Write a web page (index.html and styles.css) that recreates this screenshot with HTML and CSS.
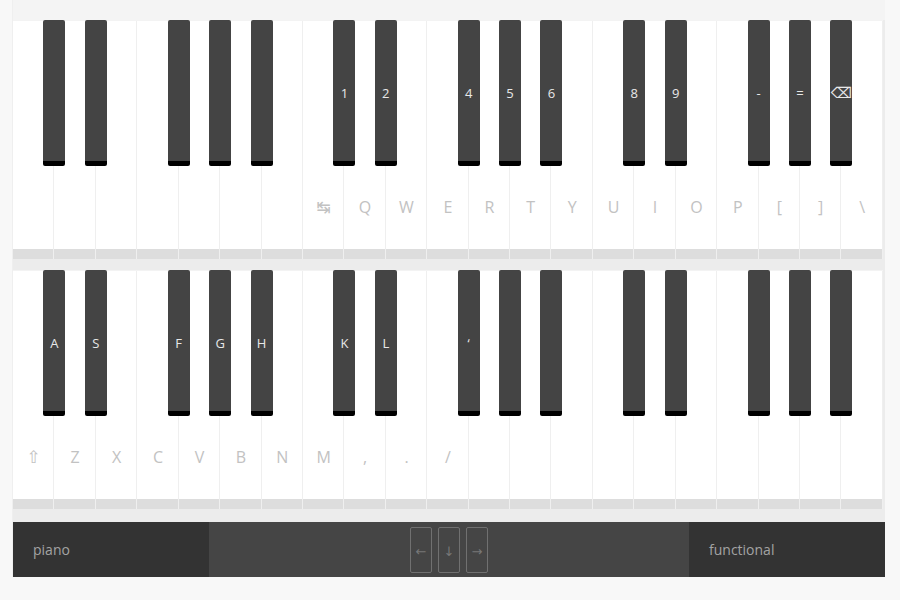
FILE: index.html
```html
<!DOCTYPE html>
<html>
<head>
<meta charset="utf-8">
<link rel="stylesheet" href="styles.css">
</head>
<body>
<div class="app">
  <div class="top"></div>
  <div class="keyboard">
    <div class="white"><span class="black"></span></div>
    <div class="white"><span class="black"></span></div>
    <div class="white"></div>
    <div class="white"><span class="black"></span></div>
    <div class="white"><span class="black"></span></div>
    <div class="white"><span class="black"></span></div>
    <div class="white"></div>
    <div class="white"><span class="wl sym">↹</span><span class="black">1</span></div>
    <div class="white"><span class="wl">Q</span><span class="black">2</span></div>
    <div class="white"><span class="wl">W</span></div>
    <div class="white"><span class="wl">E</span><span class="black">4</span></div>
    <div class="white"><span class="wl">R</span><span class="black">5</span></div>
    <div class="white"><span class="wl">T</span><span class="black">6</span></div>
    <div class="white"><span class="wl">Y</span></div>
    <div class="white"><span class="wl">U</span><span class="black">8</span></div>
    <div class="white"><span class="wl">I</span><span class="black">9</span></div>
    <div class="white"><span class="wl">O</span></div>
    <div class="white"><span class="wl">P</span><span class="black">-</span></div>
    <div class="white"><span class="wl">[</span><span class="black">=</span></div>
    <div class="white"><span class="wl">]</span><span class="black sym">⌫</span></div>
    <div class="white"><span class="wl">\</span></div>
  </div>
  <div class="keyboard second">
    <div class="white"><span class="wl sym">⇧</span><span class="black">A</span></div>
    <div class="white"><span class="wl">Z</span><span class="black">S</span></div>
    <div class="white"><span class="wl">X</span></div>
    <div class="white"><span class="wl">C</span><span class="black">F</span></div>
    <div class="white"><span class="wl">V</span><span class="black">G</span></div>
    <div class="white"><span class="wl">B</span><span class="black">H</span></div>
    <div class="white"><span class="wl">N</span></div>
    <div class="white"><span class="wl">M</span><span class="black">K</span></div>
    <div class="white"><span class="wl">,</span><span class="black">L</span></div>
    <div class="white"><span class="wl">.</span></div>
    <div class="white"><span class="wl">/</span><span class="black">‘</span></div>
    <div class="white"><span class="black"></span></div>
    <div class="white"><span class="black"></span></div>
    <div class="white"></div>
    <div class="white"><span class="black"></span></div>
    <div class="white"><span class="black"></span></div>
    <div class="white"></div>
    <div class="white"><span class="black"></span></div>
    <div class="white"><span class="black"></span></div>
    <div class="white"><span class="black"></span></div>
    <div class="white"></div>
  </div>
  <div class="bar">
    <div class="side">piano</div>
    <div class="center">
      <button class="arrow">←</button>
      <button class="arrow">↓</button>
      <button class="arrow">→</button>
    </div>
    <div class="side">functional</div>
  </div>
</div>
</body>
</html>
```

FILE: styles.css
```css
html, body {
  margin: 0;
  padding: 0;
}
body {
  background: #f8f8f8;
  font-family: "Open Sans", "DejaVu Sans", sans-serif;
  height: 600px;
  overflow: hidden;
}
.app {
  margin-left: 13px;
  width: 872px;
  background: #ececec;
  box-shadow: -1px 0 0 #efefef;
}
.top {
  height: 20px;
  background: #f4f4f4;
}
.keyboard {
  display: flex;
  height: 239px;
  width: 870px;
  margin-bottom: 11px;
}
.keyboard.second {
  margin-bottom: 13px;
}
.white {
  flex: 1 1 0;
  position: relative;
  background: linear-gradient(to bottom, #fff calc(100% - 10px), #dddddd calc(100% - 10px));
  border-top: 1px solid #f3f3f3;
  box-shadow: inset -1px 0 0 #efefef;
  display: flex;
  align-items: flex-end;
  justify-content: center;
  box-sizing: border-box;
  padding-bottom: 10px;
}
.wl {
  color: #c2c2c2;
  font-size: 16px;
  font-weight: 400;
  line-height: 20px;
  padding-bottom: 32px;
}
.wl.sym {
  font-family: "DejaVu Sans", sans-serif;
  font-size: 17px;
}
.black {
  position: absolute;
  z-index: 2;
  top: -1px;
  right: -11px;
  width: 22px;
  height: 146px;
  box-sizing: border-box;
  background: #444;
  border-bottom: 5px solid #000;
  border-radius: 2px;
  display: flex;
  align-items: center;
  justify-content: center;
  color: #e8e8e8;
  font-size: 13px;
  padding-top: 4px;
}
.black.sym {
  font-family: "DejaVu Sans", sans-serif;
  font-size: 15px;
}
.bar {
  display: flex;
  height: 55px;
}
.side {
  width: 196px;
  background: #333;
  color: #a3a3a3;
  font-size: 14px;
  display: flex;
  align-items: center;
  padding-left: 20px;
  box-sizing: border-box;
}
.center {
  flex: 1;
  background: #454545;
  display: flex;
  align-items: center;
  justify-content: center;
  gap: 6px;
}
.arrow {
  width: 22px;
  height: 46px;
  box-sizing: border-box;
  background: transparent;
  border: 1px solid #707070;
  border-radius: 2px;
  color: #777;
  font-family: "DejaVu Sans", sans-serif;
  font-size: 13px;
  padding: 4px 0 0 0;
  margin: 0;
}
```
